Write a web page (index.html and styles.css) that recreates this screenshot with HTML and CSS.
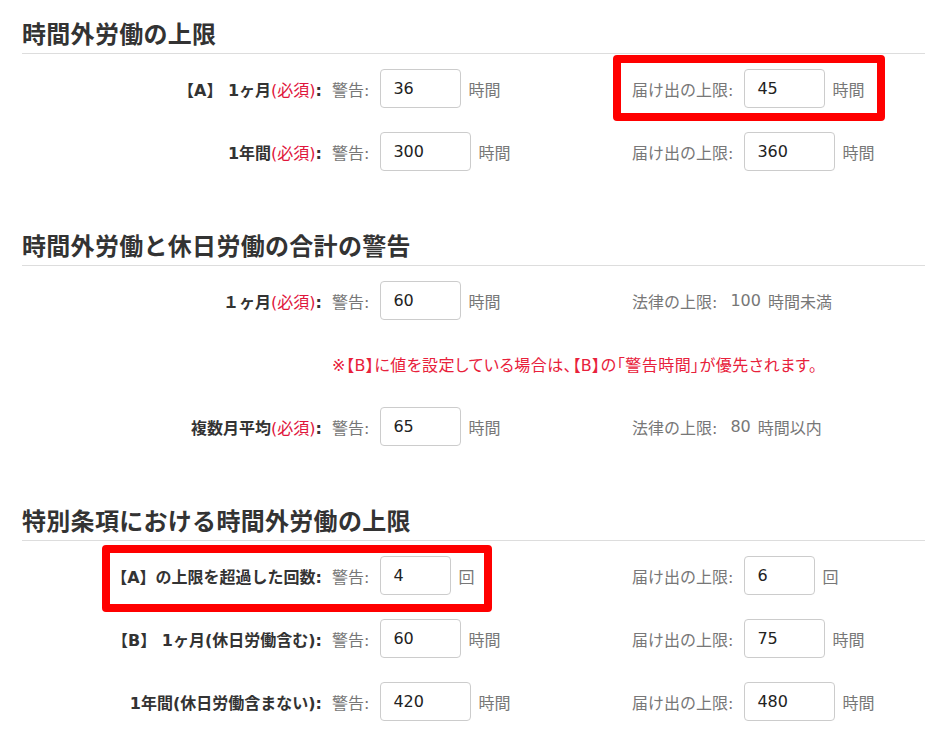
FILE: index.html
```html
<!DOCTYPE html>
<html>
<head>
    <meta charset="utf-8">
    <title>時間外労働の設定</title>
    <link rel="stylesheet" href="styles.css">
</head>
<body>
    <section class="group first">
        <h2 class="group-title">時間外労働の上限</h2>
        <div class="rows">
            <div class="row">
                <div class="label"><b>【A】 1ヶ月</b><span class="req">(必須)</span><b>:</b></div>
                <div class="warn"><span class="cap">警告:</span><input class="num w2" type="text" value="36"><span class="unit">時間</span></div>
                <div class="limit marked"><span class="cap">届け出の上限:</span><input class="num w2" type="text" value="45"><span class="unit">時間</span><span class="mark mark-limit"></span></div>
            </div>
            <div class="row">
                <div class="label"><b>1年間</b><span class="req">(必須)</span><b>:</b></div>
                <div class="warn"><span class="cap">警告:</span><input class="num w3" type="text" value="300"><span class="unit">時間</span></div>
                <div class="limit"><span class="cap">届け出の上限:</span><input class="num w3" type="text" value="360"><span class="unit">時間</span></div>
            </div>
        </div>
    </section>

    <section class="group">
        <h2 class="group-title">時間外労働と休日労働の合計の警告</h2>
        <div class="rows">
            <div class="row">
                <div class="label"><b>１ヶ月</b><span class="req">(必須)</span><b>:</b></div>
                <div class="warn"><span class="cap">警告:</span><input class="num w2" type="text" value="60"><span class="unit">時間</span></div>
                <div class="limit"><span class="cap">法律の上限:</span><span class="law">100</span><span class="unit">時間未満</span></div>
            </div>
            <div class="row">
                <div class="label"></div>
                <div class="note">※【B】に値を設定している場合は、【B】の「警告時間」が優先されます。</div>
            </div>
            <div class="row">
                <div class="label"><b>複数月平均</b><span class="req">(必須)</span><b>:</b></div>
                <div class="warn"><span class="cap">警告:</span><input class="num w2" type="text" value="65"><span class="unit">時間</span></div>
                <div class="limit"><span class="cap">法律の上限:</span><span class="law">80</span><span class="unit">時間以内</span></div>
            </div>
        </div>
    </section>

    <section class="group">
        <h2 class="group-title">特別条項における時間外労働の上限</h2>
        <div class="rows">
            <div class="row">
                <div class="label"><b class="marked">【A】の上限を超過した回数:<span class="mark mark-count"></span></b></div>
                <div class="warn"><span class="cap">警告:</span><input class="num w1" type="text" value="4"><span class="unit">回</span></div>
                <div class="limit"><span class="cap">届け出の上限:</span><input class="num w1" type="text" value="6"><span class="unit">回</span></div>
            </div>
            <div class="row">
                <div class="label"><b>【B】 1ヶ月(休日労働含む):</b></div>
                <div class="warn"><span class="cap">警告:</span><input class="num w2" type="text" value="60"><span class="unit">時間</span></div>
                <div class="limit"><span class="cap">届け出の上限:</span><input class="num w2" type="text" value="75"><span class="unit">時間</span></div>
            </div>
            <div class="row">
                <div class="label"><b>1年間(休日労働含まない):</b></div>
                <div class="warn"><span class="cap">警告:</span><input class="num w3" type="text" value="420"><span class="unit">時間</span></div>
                <div class="limit"><span class="cap">届け出の上限:</span><input class="num w3" type="text" value="480"><span class="unit">時間</span></div>
            </div>
        </div>
    </section>
</body>
</html>
```

FILE: styles.css
```css
body {
    margin: 0;
    padding: 0;
    font-family: "DejaVu Sans", "Noto Sans CJK JP", sans-serif;
    font-size: 16px;
    color: #333;
    background: #fff;
    overflow: hidden;
}
.group {
    margin: 60px 0 0 22px;
}
.group.first {
    margin-top: 19px;
}
.group-title {
    margin: 0;
    padding-bottom: 2px;
    font-size: 24px;
    line-height: 32px;
    letter-spacing: 0.3px;
    font-weight: bold;
    color: #333;
    border-bottom: 1px solid #ddd;
}
.rows {
    display: flex;
    flex-direction: column;
    gap: 24px;
    padding-top: 15px;
}
.row {
    display: flex;
    align-items: center;
    height: 39px;
}
.label {
    width: 300px;
    text-align: right;
    white-space: nowrap;
}
.label b {
    font-weight: bold;
    color: #333;
}
.req {
    color: #e0153c;
}
.warn {
    width: 300px;
    padding-left: 10px;
    display: flex;
    align-items: center;
}
.limit {
    display: flex;
    align-items: center;
}
.cap {
    color: #777;
    margin-right: 11px;
    white-space: nowrap;
}
.unit {
    color: #777;
    margin-left: 7px;
}
.law {
    color: #777;
    margin-left: 2px;
}
.note {
    padding-left: 10px;
    color: #e8213b;
    white-space: nowrap;
    letter-spacing: 0.5px;
    font-feature-settings: "palt";
}
.num {
    box-sizing: border-box;
    height: 39px;
    padding: 0 12px;
    border: 1px solid #ccc;
    border-radius: 4px;
    font-family: "DejaVu Sans", "Noto Sans CJK JP", sans-serif;
    font-size: 16px;
    color: #222;
    background: #fff;
}
.w1 { width: 71px; }
.w2 { width: 81px; }
.w3 { width: 91px; }

/* annotation boxes */
.marked {
    position: relative;
}
.mark {
    position: absolute;
    border: 8px solid #f00;
    border-radius: 4px;
    pointer-events: none;
}
.mark-limit {
    top: -14px;
    bottom: -13px;
    left: -19px;
    right: -21px;
}
.mark-count {
    top: -23px;
    bottom: -25px;
    left: -9px;
    right: -170px;
}
```
